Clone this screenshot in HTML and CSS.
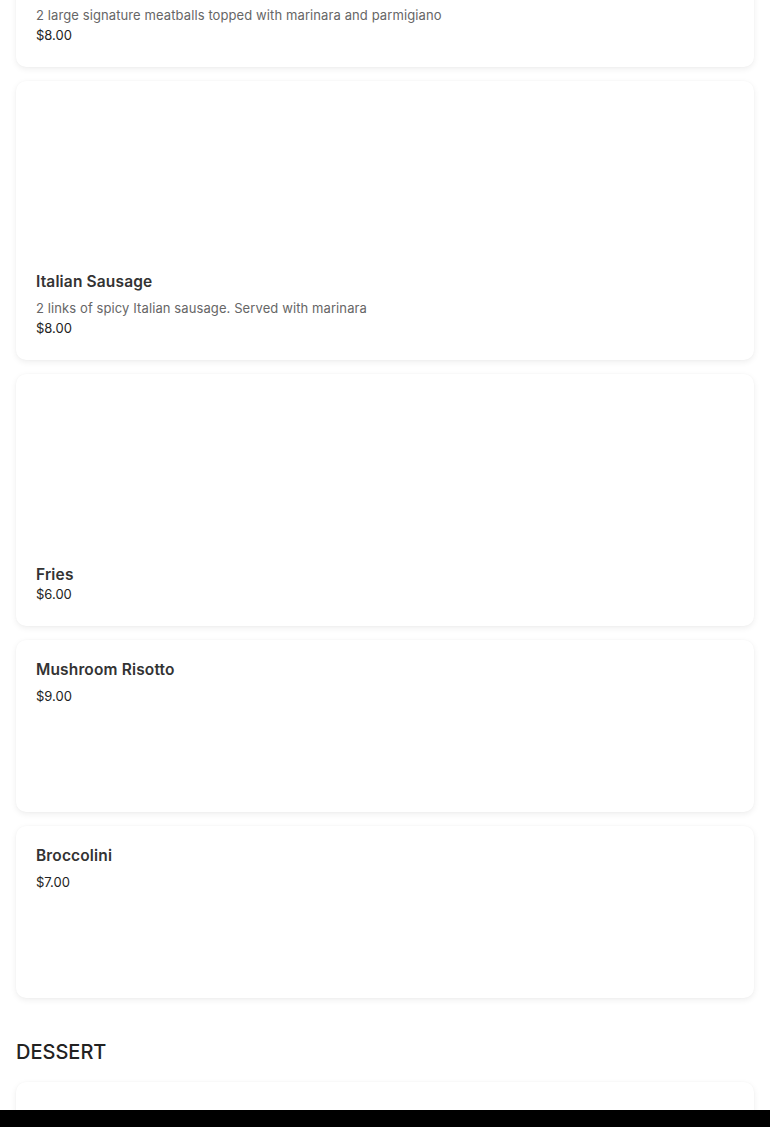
FILE: index.html
```html
<!DOCTYPE html>
<html lang="en">
<head>
<meta charset="utf-8">
<title>Menu</title>
<link rel="stylesheet" href="styles.css">
</head>
<body>
<main class="menu">
  <section class="section">
    <div class="items">
      <article class="card card-first">
        <p class="desc">2 large signature meatballs topped with marinara and parmigiano</p>
        <p class="price">$8.00</p>
      </article>
      <article class="card">
        <div class="photo"></div>
        <h3 class="name">Italian Sausage</h3>
        <p class="desc">2 links of spicy Italian sausage. Served with marinara</p>
        <p class="price">$8.00</p>
      </article>
      <article class="card">
        <div class="photo"></div>
        <h3 class="name">Fries</h3>
        <p class="price price-tight">$6.00</p>
      </article>
      <article class="card card-plain">
        <h3 class="name">Mushroom Risotto</h3>
        <p class="desc desc-empty"></p>
        <p class="price">$9.00</p>
      </article>
      <article class="card card-plain">
        <h3 class="name">Broccolini</h3>
        <p class="desc desc-empty"></p>
        <p class="price">$7.00</p>
      </article>
    </div>
  </section>
  <section class="section">
    <h2 class="section-title">DESSERT</h2>
    <div class="items">
      <article class="card card-plain"></article>
    </div>
  </section>
</main>
<footer class="bottom-bar"></footer>
</body>
</html>
```
FILE: styles.css
```css
* { box-sizing: border-box; }
html, body { margin: 0; padding: 0; background: #fff; }
body {
  font-family: Inter, "Noto Sans", "Liberation Sans", sans-serif;
  color: #222;
  overflow: hidden;
  height: 1127px;
}
.menu { padding: 0 16px; }
.items { display: flex; flex-direction: column; gap: 14px; }
.card {
  background: #fff;
  border-radius: 10px;
  box-shadow: 0 2px 6px rgba(0, 0, 0, 0.07), 0 0 2px rgba(0, 0, 0, 0.03);
  padding: 20px 20px 22px;
  display: flex;
  flex-direction: column;
}
.card-first { margin-top: -21px; }
.card-plain { min-height: 172px; }
.photo { height: 171px; }
.name {
  margin: 0;
  font-size: 15.5px;
  line-height: 20px;
  font-weight: 600;
  color: #333;
  letter-spacing: 0.15px;
}
.desc {
  margin: 6px 0 0;
  font-size: 13px;
  line-height: 20px;
  color: #666;
  letter-spacing: 0.1px;
}
.desc-empty { height: 6px; margin: 0; }
.price {
  margin: 0;
  font-size: 13px;
  line-height: 20px;
  color: #222;
}
.price-tight { margin-top: -1px; }
.section-title {
  margin: 40px 0 16px;
  font-size: 20px;
  line-height: 28px;
  font-weight: 500;
  color: #222;
  letter-spacing: 0;
}
.bottom-bar {
  position: fixed;
  left: 0;
  right: 0;
  bottom: 0;
  height: 17px;
  background: #000;
}
```
